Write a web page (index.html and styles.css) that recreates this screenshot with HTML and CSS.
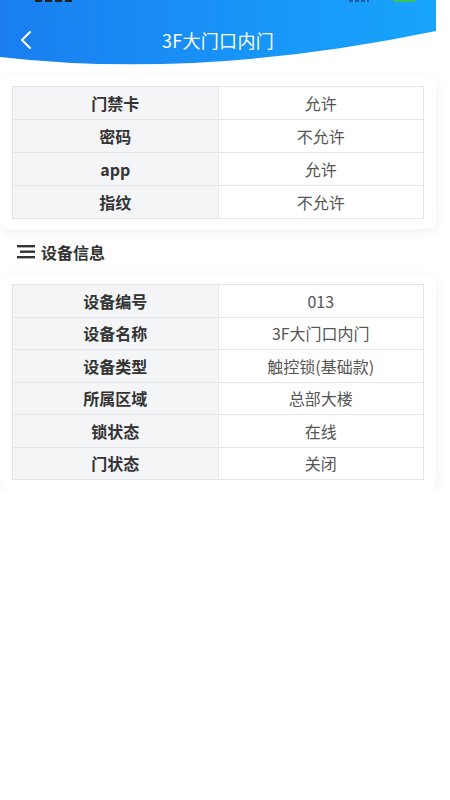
FILE: index.html
```html
<!DOCTYPE html>
<html lang="zh-CN">
<head>
    <meta charset="UTF-8">
    <title>3F大门口内门</title>
    <link rel="stylesheet" href="styles.css">
</head>
<body>
    <div class="app">
        <div class="header">
            <svg class="header-bg" width="436" height="66" viewBox="0 0 436 66">
                <defs>
                    <linearGradient id="hg" x1="0" y1="0" x2="1" y2="0">
                        <stop offset="0" stop-color="#1a7ef0"/>
                        <stop offset="1" stop-color="#17a5fc"/>
                    </linearGradient>
                </defs>
                <path d="M0 0 H436 V31 Q200 80 0 57 Z" fill="url(#hg)"/>
            </svg>
            <div class="status">
                <span class="time"></span>
                <span class="signal"></span>
                <span class="battery"></span>
            </div>
            <div class="nav">
                <span class="back">
                    <svg width="14" height="20" viewBox="0 0 14 20">
                        <path d="M11 2 L3 10 L11 18" fill="none" stroke="#fff" stroke-width="2" stroke-linecap="round" stroke-linejoin="round"/>
                    </svg>
                </span>
                <span class="title">3F大门口内门</span>
            </div>
        </div>

        <div class="card first">
            <table class="info">
                <tr><th>门禁卡</th><td>允许</td></tr>
                <tr><th>密码</th><td>不允许</td></tr>
                <tr><th>app</th><td>允许</td></tr>
                <tr><th>指纹</th><td>不允许</td></tr>
            </table>
        </div>

        <div class="section-title">
            <svg width="18" height="14" viewBox="0 0 18 14">
                <rect x="0" y="0" width="18" height="2.4" fill="#333"/>
                <rect x="3" y="5.5" width="15" height="2.4" fill="#333"/>
                <rect x="0" y="11" width="18" height="2.4" fill="#333"/>
            </svg>
            <span>设备信息</span>
        </div>

        <div class="card">
            <table class="info compact">
                <tr><th>设备编号</th><td>013</td></tr>
                <tr><th>设备名称</th><td>3F大门口内门</td></tr>
                <tr><th>设备类型</th><td>触控锁(基础款)</td></tr>
                <tr><th>所属区域</th><td>总部大楼</td></tr>
                <tr><th>锁状态</th><td>在线</td></tr>
                <tr><th>门状态</th><td>关闭</td></tr>
            </table>
        </div>
    </div>
</body>
</html>
```

FILE: styles.css
```css
body {
    margin: 0;
    background-color: #fff;
    font-family: "Noto Sans CJK SC", "Noto Sans", sans-serif;
    color: #333;
}
.app {
    width: 436px;
}
.header {
    position: relative;
    height: 66px;
}
.header-bg {
    position: absolute;
    top: 0;
    left: 0;
}
.status {
    position: relative;
    display: flex;
    align-items: flex-start;
    height: 3px;
    overflow: hidden;
}
.time {
    width: 40px;
    height: 2px;
    margin-left: 35px;
    background: repeating-linear-gradient(90deg, #222 0 7px, transparent 7px 10px);
}
.signal {
    width: 20px;
    height: 2px;
    margin-left: auto;
    background: repeating-linear-gradient(90deg, #1d5fa8 0 4px, transparent 4px 6px);
}
.battery {
    width: 23px;
    height: 2px;
    margin-left: 24px;
    margin-right: 20px;
    background-color: #3bc45a;
    border-radius: 0 0 2px 2px;
}
.nav {
    position: relative;
    display: flex;
    align-items: center;
    height: 30px;
    margin-top: 22px;
}
.back {
    display: flex;
    width: 54px;
    padding-left: 19px;
    box-sizing: border-box;
}
.title {
    flex: 1;
    margin-right: 54px;
    text-align: center;
    color: #fff;
    font-size: 18px;
    letter-spacing: 0.3px;
}
.card {
    background-color: #fff;
    border-radius: 8px;
    padding: 10px 12px;
    box-shadow: 0 3px 12px rgba(0, 0, 0, 0.06);
}
.card.first {
    margin-top: 10px;
}
.info {
    width: 100%;
    border-collapse: collapse;
    font-size: 16px;
}
.info th,
.info td {
    width: 50%;
    height: 32px;
    padding: 0;
    text-align: center;
    border: 1.5px solid #e3e5ea;
}
.info.compact th,
.info.compact td {
    height: 31.5px;
}
.info th {
    background-color: #f4f5f7;
    font-weight: bold;
    color: #333;
}
.info td {
    color: #555;
}
.section-title {
    display: flex;
    align-items: center;
    gap: 6px;
    height: 45px;
    padding-left: 17px;
    font-size: 16px;
    font-weight: bold;
    color: #333;
}
```
